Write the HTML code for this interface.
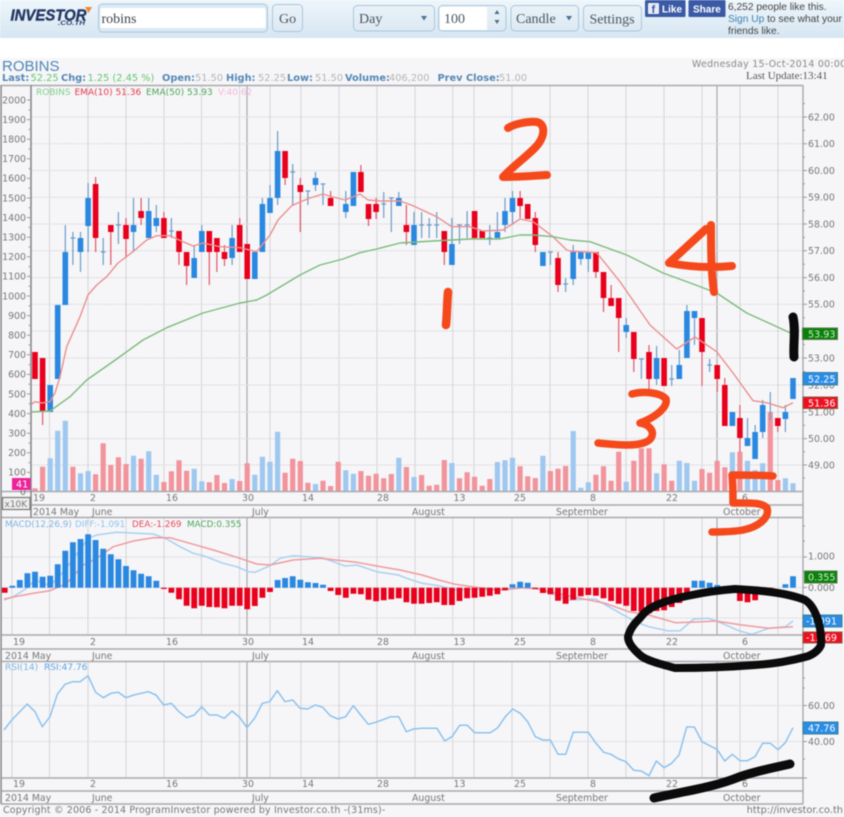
<!DOCTYPE html>
<html><head><meta charset="utf-8"><title>ROBINS</title>
<style>
html,body{margin:0;padding:0;background:#fff}
body{width:844px;height:817px;overflow:hidden}
svg{display:block;filter:blur(.45px)}
.d{font-family:"DejaVu Sans",sans-serif}
.g{font-family:"DejaVu Sans",sans-serif;font-size:9.4px;fill:#777}
.b{font-family:"DejaVu Sans",sans-serif;font-size:9.8px;font-weight:bold;fill:#5588b5}
.v{font-family:"DejaVu Sans",sans-serif;font-size:9.8px;fill:#b5b5b5}
.t{font-family:"Liberation Serif",serif;font-size:14px;fill:#4a5560}
.f{font-family:"Liberation Sans",sans-serif;font-size:10.2px}
.w{font-family:"DejaVu Sans",sans-serif;font-size:9.6px;fill:#fff}
</style></head><body>
<svg width="844" height="817" viewBox="0 0 844 817" xmlns="http://www.w3.org/2000/svg">
<defs>
<linearGradient id="hd" x1="0" y1="0" x2="0" y2="1"><stop offset="0" stop-color="#eef6fb"/><stop offset="1" stop-color="#d6e6f2"/></linearGradient>
<linearGradient id="bt" x1="0" y1="0" x2="0" y2="1"><stop offset="0" stop-color="#e9f2f8"/><stop offset="1" stop-color="#dde9f3"/></linearGradient>
</defs>
<rect width="844" height="817" fill="#fff"/>
<rect width="844" height="38" fill="url(#hd)"/>
<!-- logo -->
<text x="10.5" y="20.500" font-family="Liberation Sans,sans-serif" font-size="16" font-weight="bold" font-style="italic" fill="#263863" stroke="#263863" stroke-width=".4" textLength="76" lengthAdjust="spacingAndGlyphs">INVESTOR</text>
<text x="58" y="25" font-family="Liberation Sans,sans-serif" font-size="6.5" font-weight="bold" font-style="italic" fill="#2b3e6e" textLength="27" lengthAdjust="spacingAndGlyphs">.CO.TH</text>
<path d="M85 7h7l-3.5 6z" fill="#f08a2c"/>
<!-- controls -->
<rect x="98.500" y="4" width="169" height="28" rx="4" fill="#dbe9f4" stroke="#a9c6dc"/>
<rect x="100.500" y="8" width="165" height="20" rx="2" fill="#fff"/>
<text x="101.500" y="23" class="t" style="fill:#3c444c">robins</text>
<rect x="272.500" y="4.500" width="30" height="27" rx="4" fill="url(#bt)" stroke="#a9c6dc"/>
<text x="279" y="23" class="t">Go</text>
<rect x="353.500" y="5.500" width="81" height="25.500" rx="4" fill="url(#bt)" stroke="#a9c6dc"/>
<text x="359" y="23" class="t">Day</text>
<path d="M421 16h6l-3 4.500z" fill="#4d6f8c"/>
<rect x="438.500" y="5.500" width="67.500" height="25.500" rx="4" fill="url(#bt)" stroke="#a9c6dc"/>
<rect x="440" y="7" width="47" height="23" fill="#fff"/>
<text x="444" y="23" class="t">100</text>
<path d="M494.500 14l2.500-4 2.500 4zM494.500 20l2.500 4 2.500-4z" fill="#4d6f8c"/>
<rect x="511" y="5.500" width="67.500" height="25.500" rx="4" fill="url(#bt)" stroke="#a9c6dc"/>
<text x="516" y="23" class="t">Candle</text>
<path d="M566 16h6l-3 4.500z" fill="#4d6f8c"/>
<rect x="583.500" y="5.500" width="58" height="25.500" rx="4" fill="url(#bt)" stroke="#a9c6dc"/>
<text x="589.500" y="23.500" class="t">Settings</text>
<!-- fb -->
<rect x="645" y="0" width="40.500" height="17" rx="1" fill="#3b5aa6"/>
<rect x="648" y="3" width="11" height="11" rx="1" fill="#e8edf6"/>
<text x="651.500" y="13" font-family="Liberation Sans,sans-serif" font-size="11" font-weight="bold" fill="#3b5aa6">f</text>
<text x="662" y="12.500" font-family="Liberation Sans,sans-serif" font-size="10" font-weight="bold" fill="#fff">Like</text>
<rect x="688.500" y="0" width="37" height="17" rx="1" fill="#3b5aa6"/>
<text x="693" y="12.500" font-family="Liberation Sans,sans-serif" font-size="10" font-weight="bold" fill="#fff">Share</text>
<text x="728" y="10" class="f" fill="#444">6,252 people like this.</text>
<text x="728" y="22" class="f" fill="#444"><tspan fill="#3f7fb0">Sign Up</tspan> to see what your</text>
<text x="728" y="34" class="f" fill="#444">friends like.</text>

<!-- chart background -->
<rect x="0" y="58" width="844" height="759" fill="#f6f6f8"/>
<text x="2" y="71" font-family="Liberation Sans,sans-serif" font-size="15" fill="#4f86b4">ROBINS</text>
<text x="2" y="81" class="b">Last:</text><text x="30.500" y="81" class="v" style="fill:#63c76f">52.25</text>
<text x="61" y="81" class="b">Chg:</text><text x="87.500" y="81" class="v" style="fill:#63c76f">1.25 (2.45 %)</text>
<text x="162" y="81" class="b">Open:</text><text x="195" y="81" class="v">51.50</text>
<text x="226" y="81" class="b">High:</text><text x="258" y="81" class="v">52.25</text>
<text x="287" y="81" class="b">Low:</text><text x="315" y="81" class="v">51.50</text>
<text x="345" y="81" class="b">Volume:</text><text x="389" y="81" class="v">406,200</text>
<text x="437.500" y="81" class="b">Prev Close:</text><text x="499" y="81" class="v">51.00</text>
<text x="692" y="67" class="d" font-size="9.400" fill="#888" letter-spacing=".3">Wednesday 15-Oct-2014 00:00</text>
<text x="746" y="79" font-family="Liberation Serif,serif" font-size="11" fill="#555">Last Update:13:41</text>

<!-- vertical grid -->
<path fill="none" stroke="#d6d6da" stroke-width="1" d="M49.500 86V491M88 86V491M126 86V491M164 86V491M201.500 86V491M239.500 86V491M270 86V491M301 86V491M339 86V491M377 86V491M415 86V491M452.700 86V491M474 86V491M512 86V491M550 86V491M588 86V491M626 86V491M664 86V491M702 86V491M740 86V491M778 86V491
M12 518V635M49.500 518V635M88 518V635M126 518V635M164 518V635M201.500 518V635M239.500 518V635M270 518V635M301 518V635M339 518V635M377 518V635M415 518V635M452.700 518V635M474 518V635M512 518V635M550 518V635M588 518V635M626 518V635M664 518V635M702 518V635M740 518V635M778 518V635
M12 662V778M49.500 662V778M88 662V778M126 662V778M164 662V778M201.500 662V778M239.500 662V778M270 662V778M301 662V778M339 662V778M377 662V778M415 662V778M452.700 662V778M474 662V778M512 662V778M550 662V778M588 662V778M626 662V778M664 662V778M702 662V778M740 662V778M778 662V778"/>
<path fill="none" stroke="#ababaf" stroke-width="1.200" d="M247 86V491M717 86V491M247 518V635M717 518V635M247 662V778M717 662V778"/>
<!-- horizontal grid -->
<path fill="none" stroke="#d4d4d8" stroke-width="1" stroke-dasharray="1.500 1" d="M31 117H803M31 143.800H803M31 170.500H803M31 197.300H803M31 224H803M31 250.800H803M31 277.600H803M31 304.300H803M31 331H803M31 358H803M31 385H803M31 412H803M31 438.600H803M31 465H803M2 557H803M2 587.500H803M2 618H803M2 705.500H803M2 741.500H803"/>

<!-- volume -->
<path fill="none" stroke="#f2949c" stroke-width="5.200" d="M35 491V488.300M42.600 491V466.700M72.900 491V466.700M95.600 491V474.300M103.200 491V443.300M110.800 491V465M118.400 491V457.300M126 491V464M141.100 491V458.700M171.400 491V471.300M163.900 491V482M179 491V460.300M186.600 491V470.700M209.300 491V482.300M216.900 491V475M224.500 491V483M239.700 491V481M247.200 491V463.300M285.100 491V472.700M292.700 491V458.700M300.300 491V461M307.900 491V482.700M323 491V480.700M330.600 491V486M338.200 491V461.700M360.900 491V471M368.500 491V475.700M376.100 491V473.700M383.700 491V478.300M391.300 491V474M406.400 491V467M421.600 491V475M429.200 491V485.700M436.700 491V484.700M444.300 491V460M459.500 491V478.300M467.100 491V472.300M474.600 491V476.700M482.200 491V485.700M489.800 491V479M520.100 491V466.300M527.700 491V476.300M535.300 491V478M550.400 491V471M558 491V468.700M565.600 491V466M595.900 491V474.700M603.500 491V466.300M611.100 491V480.700M618.700 491V451.700M633.800 491V460.700M641.400 491V448.300M649 491V448.300M664.100 491V464.300M671.700 491V480.700M702 491V469M709.600 491V472.700M717.200 491V460.700M724.800 491V467.300M739.900 491V451.700M770.300 491V412M777.800 491V480"/>
<path fill="none" stroke="#9fc8f0" stroke-width="5.200" d="M50.200 491V458.300M57.700 491V430.700M65.300 491V420.700M80.500 491V473.300M88.100 491V471M133.500 491V455.700M148.700 491V451.300M156.300 491V474.700M194.200 491V468.700M201.800 491V481.300M232.100 491V479M254.800 491V474.700M262.400 491V456.700M270 491V461.700M277.600 491V431.700M315.500 491V484M345.800 491V470.300M353.400 491V473.700M398.800 491V457.700M414 491V477M451.900 491V463M497.400 491V462M505 491V460.300M512.500 491V457.700M542.900 491V455.700M573.200 491V431M580.800 491V487.700M588.300 491V482.300M626.200 491V481.700M656.600 491V473.300M679.300 491V460.700M686.900 491V463M694.500 491V480.700M732.400 491V452.300M747.500 491V460.700M755.100 491V470M762.700 491V463.300M785.400 491V478.300M793 491V483.300"/>

<!-- wicks -->
<path fill="none" stroke="#e0566a" stroke-width="1.200" d="M42.600 358V425M95.600 177V252M110.800 232V265M126 218V258M141.100 198V225M163.900 212V238M179 252V265M186.600 266V285M209.300 252V285M216.900 252V272M224.500 245V266M239.700 218V225M285.100 178V185M300.300 178V232M330.600 191V206M360.900 165V172M368.500 219V226M376.100 198V219M406.400 205V245M444.300 252V265M520.100 191V218M535.300 212V252M558 252V292M595.900 272V278M603.500 298V312M611.100 285V298M618.700 318V352M633.800 359V372M649 345V392M702 352V386M717.200 379V392M724.800 378V385M739.900 405V452M777.800 426V432"/>
<path fill="none" stroke="#6a9cc8" stroke-width="1.200" d="M65.300 225V252M80.500 232V272M88.100 183V252M133.500 198V252M148.700 198V238M156.300 205V232M194.200 245V278M201.800 225V252M232.100 225V265M262.400 198V204M270 185V198M277.600 131V205M315.500 172V191M345.800 191V218M398.800 192V198M414 212V225M451.900 218V244M497.400 212V232M505 198V232M512.500 191V225M573.200 245V285M580.800 259V265M588.300 259V272M626.200 318V338M656.600 346V385M679.300 350V365M686.900 305V311M694.500 318V345M747.500 418V438M755.100 425V432M762.700 400V438M770.300 392V420M785.400 405V432
M72.900 232V265M70.500 238H75.300M103.200 238V265M100.800 252H105.600M118.400 212V244M116 225H120.800M171.400 218V238M169 231H173.800M292.700 164V205M290.300 172H295.100M307.900 191V205M305.500 191H310.300M323 184V205M320.600 184H325.400M383.700 192V218M381.300 204H386.100M391.300 198V232M388.900 198H393.700M421.600 212V238M419.200 225H424M429.200 218V238M426.800 225H431.600M436.700 212V238M434.300 225H439.100M459.500 225V244M457.100 225H461.900M467.100 211V238M464.700 225H469.500M489.800 225V245M487.400 238H492.200M550.400 252V265M548 252H552.800M565.600 278V292M563.200 284H568M641.400 359V379M639 359H643.800M671.700 365V386M669.300 379H674.100M709.600 359V372M707.200 365H712"/>
<!-- bodies -->
<path fill="none" stroke="#e8001c" stroke-width="5.600" d="M35 352V379M42.600 358V412M95.600 184V238M110.800 225V232M126 225V239M141.100 211V218M163.900 218V238M179 231V252M186.600 252V266M209.300 231V252M216.900 238V252M224.500 252V259M239.700 225V252M247.200 244V279M285.100 151V178M300.300 185V192M330.600 198V206M360.900 172V192M368.500 204V219M376.100 204V212M406.400 225V232M444.300 231V252M474.600 211V238M482.200 231V238M520.100 198V206M527.700 204V219M535.300 218V245M558 258V285M595.900 252V272M603.500 272V298M611.100 298V306M618.700 298V318M633.800 332V359M649 352V379M664.100 358V386M702 318V352M717.200 365V379M724.800 385V426M739.900 418V438M777.800 418V426"/>
<path fill="none" stroke="#2a88e0" stroke-width="5.600" d="M50.200 385V412M57.700 305V379M65.300 252V305M80.500 238V252M88.100 198V226M133.500 225V232M148.700 211V238M156.300 218V226M194.200 258V278M201.800 231V252M232.100 238V258M254.800 252V279M262.400 204V252M270 198V213M277.600 151V198M315.500 178V185M345.800 204V212M353.400 172V206M398.800 198V206M414 225V245M451.900 244V265M497.400 232V238M505 211V225M512.500 198V212M542.900 252V266M573.200 252V279M580.800 252V259M588.300 252V259M626.200 325V332M656.600 358V379M679.300 365V379M686.900 311V358M694.500 311V318M732.400 412V426M747.500 438V446M755.100 432V459M762.700 405V432M785.400 412V419M793 378V399"/>
<!-- EMA lines -->
<polyline fill="none" stroke="#ec8f8f" stroke-width="1.400" stroke-linejoin="round" points="31.700,404 35,401.700 42,403 50,401.700 55,393 60,376.700 66.700,346.700 80,316.700 88,295 96.700,285 106.700,276.700 118,263 133,251.700 146.700,240 156.700,235.700 170,235.700 183,241.700 193,246 203,243 220,246.700 240,247.700 256.700,251.700 270,235 278,220 291.700,205.700 300,202 310,198 323,194 333,197 345,200 360,194 368,200 380,201 400,201 413,205.700 436.700,216.700 451.700,226.700 470,226.700 483,231 503,230 520,219 533,221.700 553,236.700 566.700,250 570,251 596.700,252.700 620,281.700 650,325 676.700,349 695,337 716.700,351.700 733,373 753,400.700 766.700,402.700 783,407.700 793,402.700"/>
<polyline fill="none" stroke="#7cbb7c" stroke-width="1.400" stroke-linejoin="round" points="31.700,412 50,411 70,396.700 86.700,380 116.700,359 143,340 166.700,327.700 203,313 240,303 256.700,300 266.700,295 286.700,283 300,275 320,265 343,259 360,252.700 376.700,249 400,243 433,241 470,239 500,239 520,235 533,235 553,236.700 570,240 590,241.700 626.700,255 663,273 693,284 716.700,293 746.700,313 790,332.700"/>
<text x="36" y="95" class="d" font-size="9" fill="#7fcf8a">ROBINS</text>
<text x="74.500" y="95" class="d" font-size="9" fill="#e63b4c">EMA(10) 51.36</text>
<text x="146" y="95" class="d" font-size="9" fill="#4ea65a">EMA(50) 53.93</text>
<text x="218" y="95" class="d" font-size="9" fill="#f3b6dc">V:40.62</text>

<!-- MACD -->
<polyline fill="none" stroke="#a9d0f2" stroke-width="1.500" stroke-linejoin="round" points="4,600 13.300,596.700 26.700,588.300 35,580 50,585.700 65,570 88.300,538.300 96.700,535 116.700,532.300 153.300,534 166.700,539 180,546.700 193.300,553.300 203.300,555.700 223.300,563.300 236.700,566.700 248.300,571.700 255,572.300 270,565.700 280,558.300 293.300,555.700 321.700,557.700 333.300,561.700 345,566 356.700,565 376.700,571.700 398.300,575 406.700,578.300 422,583.300 438.700,585.700 455.300,590 472,589.300 505,590 522,587.700 538.700,589 568.700,600 595.300,599 608.700,606.700 635.300,621.700 648.700,626.700 668.700,631 680.300,630.700 693.700,619 708.700,618.300 722,623.300 738.700,630.700 752,634.300 768.700,628.300 785.300,626.700 793,621"/>
<polyline fill="none" stroke="#f09a9e" stroke-width="1.500" stroke-linejoin="round" points="4,599 20,595.700 33.300,593.300 50,590.700 66.700,583.300 83.300,565 96.700,558.300 113.300,546.700 133.300,541 153.300,537.700 170,537.700 193.300,544.300 216.700,551 240,558.300 256.700,564 270,565 293.300,560 320,558.300 333.300,559.700 356.700,562.300 376.700,566 400,570 422,575 438.700,580 455.300,584.300 472,586.700 498.700,590 522,587.700 538.700,589 568.700,596 605.300,603.300 628.700,611.700 648.700,615 675.300,622.700 702,621.700 715.300,621 742,625 768.700,628.300 793,626.700"/>
<path fill="none" stroke="#e8001c" stroke-width="5.800" d="M4.700 587.700V592.700M163.900 587.700V589M171.400 587.700V592.700M179 587.700V599.300M186.600 587.700V605.700M194.200 587.700V608.300M201.800 587.700V605.700M209.300 587.700V607M216.900 587.700V607.300M224.500 587.700V608.300M232.100 587.700V605.700M239.700 587.700V605.700M247.200 587.700V609.300M254.800 587.700V606M262.400 587.700V597.700M270 587.700V592M330.600 587.700V591M338.200 587.700V595M345.800 587.700V597.700M353.400 587.700V593.700M360.900 587.700V594.300M368.500 587.700V599.700M376.100 587.700V601.300M383.700 587.700V600.300M391.300 587.700V599.300M398.800 587.700V598.300M406.400 587.700V602.300M414 587.700V603.700M421.600 587.700V603.700M429.200 587.700V603M436.700 587.700V602.300M444.300 587.700V605M451.900 587.700V605M459.500 587.700V601M467.100 587.700V598.300M474.600 587.700V597.700M482.200 587.700V596.700M489.800 587.700V595.700M497.400 587.700V594.300M505 587.700V590.300M535.300 587.700V589M542.900 587.700V593M550.400 587.700V594.300M558 587.700V600.700M565.600 587.700V603.700M573.200 587.700V599.700M580.800 587.700V596.300M588.300 587.700V595M595.900 587.700V595.700M603.500 587.700V598.300M611.100 587.700V601M618.700 587.700V603.700M626.200 587.700V605.700M633.800 587.700V611M641.400 587.700V611.700M649 587.700V613.300M656.600 587.700V611M664.100 587.700V610.300M671.700 587.700V607M679.300 587.700V603M686.900 587.700V595M724.800 587.700V591M732.400 587.700V592.300M739.900 587.700V601M747.500 587.700V602.300M755.100 587.700V600.300M762.700 587.700V592.300M770.300 587.700V589"/>
<path fill="none" stroke="#2a88e0" stroke-width="5.800" d="M12.300 587.700V585.700M19.800 587.700V580M27.400 587.700V573.300M35 587.700V571.700M42.600 587.700V576.700M50.200 587.700V575.700M57.700 587.700V564.300M65.300 587.700V550.700M72.900 587.700V542.300M80.500 587.700V539M88.100 587.700V534.300M95.600 587.700V540M103.200 587.700V548.700M110.800 587.700V554.300M118.400 587.700V559.300M126 587.700V566M133.500 587.700V570.300M141.100 587.700V573.700M148.700 587.700V576.300M156.300 587.700V580.700M277.600 587.700V580M285.100 587.700V578M292.700 587.700V576.300M300.300 587.700V579.700M307.900 587.700V582.300M315.500 587.700V583M323 587.700V584.700M512.500 587.700V584.300M520.100 587.700V581.700M527.700 587.700V582.700M694.500 587.700V580.700M702 587.700V580.700M709.600 587.700V582.700M717.200 587.700V585M785.400 587.700V584.300M793 587.700V576.300"/>
<text x="5" y="527" class="d" font-size="8.800" fill="#7fb4e0">MACD(12,26,9)</text>
<text x="75" y="527" class="d" font-size="8.800" fill="#8fc3ee">DIFF:-1.091</text>
<text x="132" y="527" class="d" font-size="8.800" fill="#e8485a">DEA:-1.269</text>
<text x="187" y="527" class="d" font-size="8.800" fill="#4ea65a">MACD:0.355</text>

<!-- RSI -->
<polyline fill="none" stroke="#8cc2ee" stroke-width="1.500" stroke-linejoin="round" points="4,730 11.700,720 27.300,704 35,711.700 42.300,726.700 50,716.700 57.300,694.300 65,684.300 72.700,681.700 80.300,681.700 88,675.700 95.700,692.300 103.300,697.700 111,693.300 118.300,692.300 126,697.700 133.700,695 148.300,691.700 156,695 163.700,705 171.300,703.300 179,711.700 186.700,717.700 194.300,715 201.700,706.700 209.300,715 217,715 224.300,718.300 232,711 239.700,717.300 247,727.700 255,717.700 262.300,703.300 269.700,701.700 277.300,690.700 285,701.700 292.700,700 300,708.300 307.700,709 315.300,705 322.700,707.300 330.300,715.700 338,719 345.700,716.700 353.300,705.700 360.700,715 368.300,724.300 375.700,722.300 391,716.700 398.700,716.700 406.300,731.700 413.700,729 422,728.300 437,728.300 444.700,741 452,736.700 459.700,725.300 467.300,725.300 474.700,732.700 490.300,732.700 497.700,727.700 505.300,716.700 512.700,709 520.300,713.300 527.700,721.700 535.300,736.700 543,740 550.300,740 558,754.300 565.700,754.300 573.300,732.300 588.300,732.300 596,743.300 603.700,752.300 611,754.300 618.700,759 626,761.700 633.700,770.300 641.300,771 649,775.700 656.300,761 664,767.700 671.700,763.300 679,755 686.700,727 694.300,727 702,741.700 709.700,745.700 717,749.300 724.700,761 732.300,754.300 740,760.700 747.300,760.700 755,756.700 762.700,743.300 770.300,743.300 778,749.700 785.300,742.700 793,727.700"/>
<text x="5" y="670" class="d" font-size="9" fill="#7fb4e0">RSI(14)</text>
<text x="44" y="670" class="d" font-size="9" fill="#5aa5e8">RSI:47.76</text>

<!-- frame rules -->
<path fill="none" stroke="#a9a9ad" stroke-width="1.400" d="M1 85.500H803M1 491.500H803M31 505H803M1 517.500H803M1 635H803M1 649H803M1 661.500H803M1 778H803M1 791H803M1 804H803"/>
<path fill="none" stroke="#8a8a8e" stroke-width="1.600" d="M1 85V804M31 85V518"/>
<path fill="none" stroke="#a9a9ad" stroke-width="1.400" d="M803 85V804"/>
<!-- ticks -->
<path fill="none" stroke="#9a9a9e" stroke-width="1" d="M27 100H31M28.500 110H31M27 119.600H31M28.500 129.400H31M27 139.200H31M28.500 149H31M27 158.800H31M28.500 168.600H31M27 178.400H31M28.500 188.200H31M27 198H31M28.500 207.800H31M27 217.600H31M28.500 227.400H31M27 237.200H31M28.500 247H31M27 256.800H31M28.500 266.600H31M27 276.400H31M28.500 286.200H31M27 296H31M28.500 305.800H31M27 315.600H31M28.500 325.400H31M27 335.200H31M28.500 345H31M27 354.800H31M28.500 364.600H31M27 374.400H31M28.500 384.200H31M27 394H31M28.500 403.800H31M27 413.600H31M28.500 423.400H31M27 433.200H31M28.500 443H31M27 452.800H31M28.500 462.600H31M27 472.400H31
M803 103.600H805M803 117H807M803 130.400H805M803 143.800H807M803 157.100H805M803 170.500H807M803 183.900H805M803 197.300H807M803 210.600H805M803 224H807M803 237.400H805M803 250.800H807M803 264.200H805M803 277.600H807M803 291H805M803 304.300H807M803 317.700H805M803 331H807M803 344.500H805M803 358H807M803 371.500H805M803 385H807M803 398.500H805M803 412H807M803 425.300H805M803 438.600H807M803 451.800H805M803 465H807M803 478H805
M803 526H805M803 541H805M803 557H807M803 572H805M803 587.500H807M803 603H805M803 618H807M803 678H805M803 688H805M803 705.500H807M803 723H805M803 741.500H807M803 759H805M803 778H807"/>
<!-- left labels -->
<g class="g" text-anchor="end">
<text x="26" y="103.300">2000</text><text x="26" y="123">1900</text><text x="26" y="142.500">1800</text><text x="26" y="162.100">1700</text><text x="26" y="181.700">1600</text><text x="26" y="201.300">1500</text><text x="26" y="220.900">1400</text><text x="26" y="240.500">1300</text><text x="26" y="260.100">1200</text><text x="26" y="279.700">1100</text><text x="26" y="299.300">1000</text><text x="26" y="318.900">900</text><text x="26" y="338.500">800</text><text x="26" y="358.100">700</text><text x="26" y="377.700">600</text><text x="26" y="397.300">500</text><text x="26" y="416.900">400</text><text x="26" y="436.500">300</text><text x="26" y="456.100">200</text><text x="26" y="475.700">100</text><text x="26" y="495">0</text>
</g>
<!-- right labels -->
<g class="g">
<text x="808" y="120.300">62.00</text><text x="808" y="147.100">61.00</text><text x="808" y="173.800">60.00</text><text x="808" y="200.600">59.00</text><text x="808" y="227.300">58.00</text><text x="808" y="254.100">57.00</text><text x="808" y="280.900">56.00</text><text x="808" y="307.600">55.00</text><text x="808" y="361.300">53.00</text><text x="808" y="388.300">52.00</text><text x="808" y="415.300">51.00</text><text x="808" y="441.900">50.00</text><text x="808" y="468.300">49.00</text>
<text x="808" y="559.300">1.000</text><text x="808" y="591">0.000</text>
<text x="808" y="709">60.00</text><text x="808" y="745">40.00</text>
</g>
<!-- date labels -->
<g class="g">
<text x="33" y="501">19</text><text x="90" y="501">2</text><text x="166" y="501">16</text><text x="242" y="501">30</text><text x="302" y="501">14</text><text x="377" y="501">28</text><text x="453.500" y="501">13</text><text x="514" y="501">25</text><text x="590" y="501">8</text><text x="666" y="501">22</text><text x="742" y="501">6</text>
<text x="33" y="515">2014 May</text><text x="92" y="515">June</text><text x="252" y="515">July</text><text x="412" y="515">August</text><text x="556" y="515">September</text><text x="723" y="515">October</text>
<text x="13" y="645">19</text><text x="90" y="645">2</text><text x="166" y="645">16</text><text x="242" y="645">30</text><text x="302" y="645">14</text><text x="377" y="645">28</text><text x="453.500" y="645">13</text><text x="514" y="645">25</text><text x="590" y="645">8</text><text x="666" y="645">22</text><text x="742" y="645">6</text>
<text x="5" y="659">2014 May</text><text x="92" y="659">June</text><text x="252" y="659">July</text><text x="412" y="659">August</text><text x="556" y="659">September</text><text x="723" y="659">October</text>
<text x="13" y="787">19</text><text x="90" y="787">2</text><text x="166" y="787">16</text><text x="242" y="787">30</text><text x="302" y="787">14</text><text x="377" y="787">28</text><text x="453.500" y="787">13</text><text x="514" y="787">25</text><text x="590" y="787">8</text><text x="666" y="787">22</text><text x="742" y="787">6</text>
<text x="5" y="801">2014 May</text><text x="92" y="801">June</text><text x="252" y="801">July</text><text x="412" y="801">August</text><text x="556" y="801">September</text><text x="723" y="801">October</text>
</g>
<!-- left badges -->
<rect x="12" y="478" width="18.500" height="12" fill="#ee2299"/><text x="16" y="487.500" class="w">41</text>
<rect x="2.500" y="497.500" width="27.500" height="12" fill="#eee" stroke="#777" stroke-width="1.200"/><text x="4.500" y="507" class="g" style="font-size:9px">x10K</text>
<!-- footer -->
<text x="3" y="813" class="d" font-size="9.500" fill="#777" letter-spacing=".15">Copyright © 2006 - 2014 ProgramInvestor powered by Investor.co.th -(31ms)-</text>
<text x="843" y="813" class="d" font-size="9.800" fill="#777" text-anchor="end">http://investor.co.th</text>

<!-- right badges -->
<rect x="802.500" y="328" width="35" height="11.500" fill="#0a820a" stroke="#5a7a50"/><text x="808" y="337.300" class="w" style="fill:#cfe8cf">53.93</text>
<rect x="803" y="372.500" width="34.500" height="12.500" fill="#2a8ce6" stroke="#3f7f90"/><text x="808" y="382.300" class="w">52.25</text>
<rect x="803" y="397" width="34.500" height="11.500" fill="#ee1020" stroke="#8a5a40"/><text x="808" y="406.300" class="w">51.36</text>
<rect x="804.500" y="571" width="32.500" height="12" fill="#0a820a" stroke="#5a7a50"/><text x="808" y="580.500" class="w" style="fill:#cfe8cf">0.355</text>
<rect x="803" y="615" width="39" height="12" fill="#2a8ce6" stroke="#3f7f90"/><text x="806" y="624.500" class="w">-1.091</text>
<rect x="803" y="632" width="39" height="11" fill="#ee1020" stroke="#8a5a40"/><text x="806" y="641" class="w">-1.269</text>
<rect x="803" y="722" width="35" height="12" fill="#2a8ce6" stroke="#3f7f90"/><text x="808" y="731.500" class="w">47.76</text>

<!-- annotations -->
<g fill="none" stroke="#f5491c" stroke-linecap="round" stroke-linejoin="round">
<path stroke-width="8" d="M508 128C514 124 528 121 537 122C545 124 545 134 539 143C533 152 515 164 503 177C516 177 532 176 547 175"/>
<path stroke-width="8.500" d="M448 292C447 303 447 315 446 325"/>
<path stroke-width="8" d="M706 229L669 263C690 267 712 268 732 266M711 225C711 250 711 272 714 292"/>
<path stroke-width="7.500" d="M632 394C642 391 660 392 666 399C668 408 654 418 640 423C648 424 654 430 652 436C650 443 638 445 628 445C618 445 608 444 598 443"/>
<path stroke-width="7.500" d="M773 476C760 475 745 475 732 475C733 485 733 495 733 503C748 503 762 502 767 508C770 518 758 527 743 530C732 532 722 532 712 532"/>
</g>
<g fill="none" stroke="#0b0b0b" stroke-linecap="round" stroke-linejoin="round">
<path stroke-width="9" d="M793 317C796 330 793 345 794 357"/>
<path stroke-width="8" d="M692 595C706 592 722 590 735 589C755 590 785 592 805 600C815 606 822 626 821 645C818 652 810 656 805 657C790 661 772 664 755 665C730 667 700 668 675 668C660 664 645 660 640 655C632 648 628 642 628 637C630 628 636 622 640 618C645 612 650 603 692 595"/>
<path stroke-width="9" d="M654 798C680 792 712 788 739 777C756 771 772 768 790 764"/>
</g>
</svg>
</body></html>
